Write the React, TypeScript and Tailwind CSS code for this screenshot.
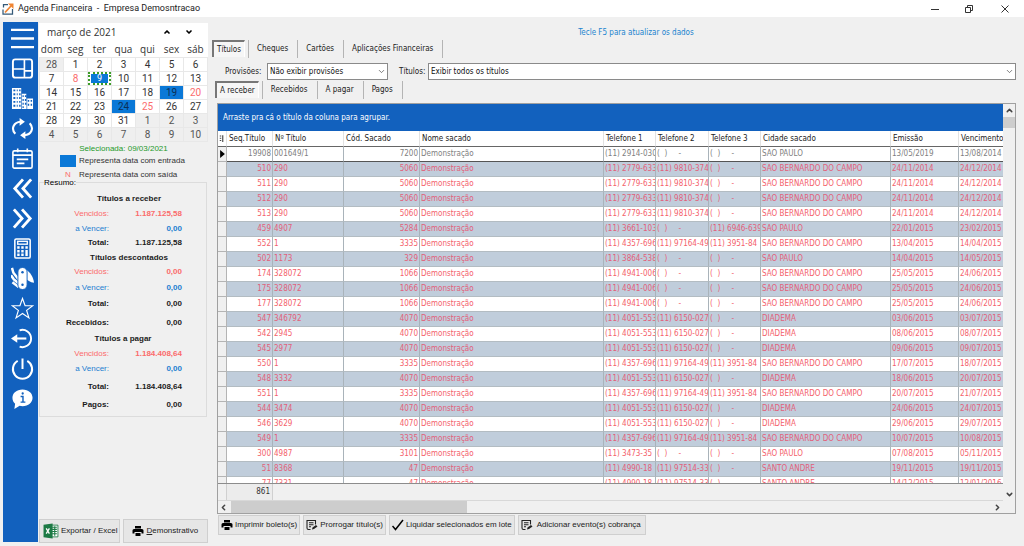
import React from "react";
import { ChevronDown, ChevronUp, ChevronLeft, ChevronRight } from "lucide-react";

const UI = "font-['DejaVu_Sans_Condensed','Noto_Sans',sans-serif]";
const ARIAL = "font-['Liberation_Sans',sans-serif]";

function SideIcon({ label, children }: { label: string; children: React.ReactNode }) {
  return (
    <button type="button" aria-label={label} className="flex h-[30px] w-full items-center justify-center">
      <svg viewBox="0 0 24 24" className="h-[23px] w-[23px]" fill="none" stroke="white" strokeWidth="2">
        {children}
      </svg>
    </button>
  );
}

function Sidebar() {
  return (
    <nav className="flex w-[35px] shrink-0 flex-col bg-[#1261be] pl-1 pt-px">
      <SideIcon label="Menu">
        <path d="M0 3h24M0 12h24M0 21h24" strokeWidth="2.400" />
      </SideIcon>
      <SideIcon label="Painel">
        <rect x="2" y="2.500" width="20" height="19" rx="2.500" />
        <path d="M14 3v18M2 12.500h12M14 14.500h8" strokeWidth="1.700" />
      </SideIcon>
      <SideIcon label="Empresa">
        <path d="M1 1h10v22H1zM11 7h5v16h-5zM16 12h7v11h-7z" fill="white" stroke="none" />
        <path
          d="M2.500 3.500h2M6 3.500h1M8.500 3.500h1.500M2.500 7.500h2M6 7.500h1M8.500 7.500h1.500M2.500 11.500h2M6 11.500h1M8.500 11.500h1.500M2.500 15.500h2M6 15.500h1M8.500 15.500h1.500M2.500 19.500h2M6 19.500h1M8.500 19.500h1.500M12 9.500h1.300M14.500 9.500H16M12 13.500h1.300M14.500 13.500H16M12 17.500h1.300M14.500 17.500H16M12 21h1.300M17.500 14.500h1.500M20.500 14.500H22M17.500 18.500h1.500M20.500 18.500H22"
          stroke="#1261be"
          strokeWidth="2"
        />
        <path d="M11 1v22M16.500 8v15" stroke="#1261be" strokeWidth="0.700" />
      </SideIcon>
      <SideIcon label="Atualizar">
        <path d="M4.500 17.500C-.5 12 3 5.500 10 5M19.500 6.500C24.500 12 21 18.500 14 19" strokeWidth="2.200" />
        <path d="M9 1l5.500 4L9 9.200zM15 14.800L9.500 19l5.500 4z" fill="white" stroke="none" />
      </SideIcon>
      <SideIcon label="Agenda">
        <rect x="2" y="4" width="20" height="18" rx="1.500" strokeWidth="1.700" />
        <path d="M2 8.500h20M7 1.500v4M17 1.500v4" strokeWidth="1.700" />
        <path d="M6 13h12M6 17h8" strokeWidth="1.800" />
      </SideIcon>
      <SideIcon label="Anterior">
        <path d="M12.500 2.500L4 12l8.500 9.500M21 2.500L12.500 12l8.500 9.500" strokeWidth="3" />
      </SideIcon>
      <SideIcon label="Próximo">
        <path d="M3 2.500L11.500 12 3 21.500M11.500 2.500L20 12l-8.500 9.500" strokeWidth="3" />
      </SideIcon>
      <SideIcon label="Calculadora">
        <rect x="4" y="2" width="16" height="20" rx="1.500" strokeWidth="1.600" />
        <rect x="7" y="4.500" width="10" height="3" strokeWidth="1.400" />
        <path d="M6.500 11h2.500M10.700 11h2.500M15 11h2.500M6.500 14.800h2.500M10.700 14.800h2.500M6.500 18.600h2.500M10.700 18.600h2.500" strokeWidth="2.600" />
        <path d="M16.250 13.500v6.400" strokeWidth="2.500" />
      </SideIcon>
      <SideIcon label="Ferramentas">
        <path d="M15 2.500c5 2.500 8.500 8 9 14-4-.5-7-2.500-9-5z" fill="white" stroke="none" />
        <path d="M1 1l1.500 5L8 13M0 8.500L3 13l5 4M1.500 16L8 21" strokeWidth="2.600" />
        <rect x="7.200" y="0.500" width="9.600" height="23" rx="4.800" fill="white" stroke="#1261be" strokeWidth="1" />
        <circle cx="12" cy="5.500" r="1.300" fill="#1261be" stroke="none" />
        <circle cx="12" cy="18.500" r="1.300" fill="#1261be" stroke="none" />
      </SideIcon>
      <SideIcon label="Favoritos">
        <path d="M12 1.500l2.700 7.600h8l-6.400 4.900 2.400 7.800L12 17.200l-6.700 4.600L7.700 14 1.300 9.100h8z" strokeWidth="1.200" />
      </SideIcon>
      <SideIcon label="Sair">
        <path d="M9 3.500A9 9 0 1 1 9 20.500" strokeWidth="2" />
        <path d="M3 12h13" strokeWidth="2.200" />
        <path d="M6.500 7.500L0 12l6.500 4.500z" fill="white" stroke="none" />
      </SideIcon>
      <SideIcon label="Desligar">
        <path d="M7 4a10 10 0 1 0 10 0M12 1.500v11" strokeWidth="2.100" />
      </SideIcon>
      <SideIcon label="Informações">
        <path d="M12 2.500c6.200 0 10.500 3.700 10.500 8.800S18.200 20 12 20c-1 0-2 0-3-.4L3.500 23l.8-5.500C2.500 16 1.500 14 1.500 11.300 1.500 6.200 5.800 2.500 12 2.500z" fill="white" stroke="none" />
        <path d="M10 10h2.500v5.500M10 15.800h5" stroke="#1261be" strokeWidth="1.500" />
        <circle cx="12.200" cy="6.800" r="1.200" fill="#1261be" stroke="none" />
      </SideIcon>
    </nav>
  );
}

const weekDays = ["dom", "seg", "ter", "qua", "qui", "sex", "sáb"];
const weeks = [
  [28, 1, 2, 3, 4, 5, 6],
  [7, 8, 9, 10, 11, 12, 13],
  [14, 15, 16, 17, 18, 19, 20],
  [21, 22, 23, 24, 25, 26, 27],
  [28, 29, 30, 31, 1, 2, 3],
  [4, 5, 6, 7, 8, 9, 10],
];

function dayStyle(week: number, day: number) {
  if ((week === 0 && day > 20) || (week >= 4 && day < 20)) return "bg-[#efefef] text-[#555]";
  if (day === 19 || day === 24) return "bg-[#0a78d7] text-[#0c2f55]";
  if (day === 8 || day === 20 || day === 25) return "text-[#fb6d6d]";
  return "text-[#333]";
}

function Calendar() {
  return (
    <section className="bg-white font-['Open_Sans','Noto_Sans',sans-serif] text-[#333]">
      <div className="flex h-[18px] items-center pl-2 pr-2 text-[10px] leading-4">
        <span className="flex-1">março de 2021</span>
        <button type="button" aria-label="Mês anterior" className="px-[7px]">
          <ChevronUp size={8} strokeWidth={5} className="text-black" />
        </button>
        <button type="button" aria-label="Próximo mês" className="px-[7px]">
          <ChevronDown size={8} strokeWidth={5} className="text-black" />
        </button>
      </div>
      <table className="w-full table-fixed border-collapse text-center font-['Roboto',sans-serif] text-[10px]">
        <thead>
          <tr className="h-4 font-['Open_Sans','Noto_Sans',sans-serif]">
            {weekDays.map((d) => (
              <th key={d} className="p-0 pt-px font-normal leading-3">
                {d}
              </th>
            ))}
          </tr>
        </thead>
        <tbody>
          {weeks.map((w, wi) => (
            <tr key={wi}>
              {w.map((d) => (
                <td key={d} className={"h-[14px] border border-[#e8e8e8] p-0 leading-[13px] " + dayStyle(wi, d)}>
                  {wi === 1 && d === 9 ? (
                    <span className="block border-2 border-dotted border-[#3c9c28] px-px">
                      <span className="block bg-[#0a78d7] text-[9px] leading-[9px] text-white">9</span>
                    </span>
                  ) : (
                    d
                  )}
                </td>
              ))}
            </tr>
          ))}
        </tbody>
      </table>
    </section>
  );
}

const red = "text-[#fb6b6b]";
const blue = "text-[#1c7fd0]";
const black = "text-[#1c1c1c]";

type Line = { title?: string; label?: string; value?: string; tone: string; gap: string };
const summary: Line[] = [
  { title: "Títulos a receber", tone: black, gap: "mt-0 pl-3" },
  { label: "Vencidos:", value: "1.187.125,58", tone: red, gap: "mt-px" },
  { label: "a Vencer:", value: "0,00", tone: blue, gap: "mt-px" },
  { label: "Total:", value: "1.187.125,58", tone: black, gap: "mt-0" },
  { title: "Títulos descontados", tone: black, gap: "mt-px pl-3" },
  { label: "Vencidos:", value: "0,00", tone: red, gap: "mt-0" },
  { label: "a Vencer:", value: "0,00", tone: blue, gap: "mt-0.5" },
  { label: "Total:", value: "0,00", tone: black, gap: "mt-0.5" },
  { label: "Recebidos:", value: "0,00", tone: black, gap: "mt-[5px]" },
  { title: "Títulos a pagar", tone: black, gap: "mt-0.5" },
  { label: "Vencidos:", value: "1.184.408,64", tone: red, gap: "mt-px" },
  { label: "a Vencer:", value: "0,00", tone: blue, gap: "mt-px" },
  { label: "Total:", value: "1.184.408,64", tone: black, gap: "mt-[4px]" },
  { label: "Pagos:", value: "0,00", tone: black, gap: "mt-[4px]" },
];

function Summary() {
  return (
    <fieldset className="-mt-[3px] mr-px border border-[#dcdcdc] pb-1">
      <legend className="ml-1 text-[8px] leading-[10px]">Resumo:</legend>
      <div className="pt-1">
        {summary.map((l, i) =>
          l.title ? (
            <h2 key={i} className={"text-center text-[8px] font-bold leading-[14px] " + l.tone + " " + l.gap}>
              {l.title}
            </h2>
          ) : (
            <div key={i} className={"flex text-[8px] leading-[14px] " + l.tone + " " + l.gap}>
              <span className={"w-[69px] text-right " + (l.tone === black ? "font-bold" : "")}>{l.label}</span>
              <span className="w-[73px] text-right font-bold">{l.value}</span>
            </div>
          )
        )}
      </div>
    </fieldset>
  );
}

function Printer() {
  return (
    <svg viewBox="0 0 24 24" className="h-3 w-3 shrink-0" fill="black">
      <path d="M6 2h12v5H6zM4 8h16a3 3 0 0 1 3 3v6h-4v-3H5v3H1v-6a3 3 0 0 1 3-3zM7 16h10v6H7z" />
    </svg>
  );
}

function NoteEdit() {
  return (
    <svg viewBox="0 0 24 24" className="h-3 w-3 shrink-0" fill="none" stroke="#222" strokeWidth="2.200">
      <path d="M9 21H5a3 3 0 0 1-3-3V3h17v8M6 7.500h9M6 11.500h9M6 15.500h4" />
      <path d="M12 21l1-4 7-5 3 3-7 5z" fill="#222" stroke="none" />
    </svg>
  );
}

function CheckMark() {
  return (
    <svg viewBox="0 0 24 24" className="h-3 w-3 shrink-0" fill="none" stroke="black" strokeWidth="3">
      <path d="M1 14l6 7L22 2" />
    </svg>
  );
}

function Excel() {
  return (
    <svg viewBox="0 0 30 30" className="h-4 w-4 shrink-0">
      <path d="M15 4h13v22H15z" fill="white" stroke="#1d7a45" strokeWidth="1.600" />
      <path d="M17 8h9M17 12h9M17 16h9M17 20h9M22 6v18" stroke="#1d7a45" strokeWidth="2" />
      <path d="M1 3.500L18 1v28L1 26.500z" fill="#1d7a45" />
      <path d="M6 10l6 10M12 10L6 20" stroke="white" strokeWidth="2.400" />
    </svg>
  );
}

function ActionButton({ className = "", children }: { className?: string; children: React.ReactNode }) {
  return (
    <button
      type="button"
      className={"flex items-center whitespace-nowrap border border-[#cfcfcf] bg-[#e6e6e6] text-[#222] " + className}
    >
      {children}
    </button>
  );
}

function Tabs({ items, className }: { items: string[]; className: string }) {
  return (
    <div role="tablist" className={"flex h-[18px] text-[8px] text-[#222] " + className}>
      {items.map((t, i) =>
        i === 0 ? (
          <div key={t} className="border-r border-[#b4b4b4] pr-[3px]">
            <button
              type="button"
              role="tab"
              aria-selected
              className="h-[17px] border-l-2 border-t-2 border-[#777] border-r border-r-white bg-[#f6f6f6] px-[3px]"
            >
              {t}
            </button>
          </div>
        ) : (
          <button key={t} type="button" role="tab" aria-selected={false} className="border-r border-[#b4b4b4] pl-2 pr-[9px]">
            {t}
          </button>
        )
      )}
    </div>
  );
}

function Select({ id, value, className }: { id: string; value: string; className: string }) {
  return (
    <div className={"relative " + className}>
      <select
        id={id}
        defaultValue={value}
        className="block h-[17px] w-full appearance-none rounded-none border border-[#8a8a8a] bg-white pl-0.5 text-[8px] text-[#111]"
      >
        <option>{value}</option>
      </select>
      <ChevronDown size={9} className="pointer-events-none absolute right-0.5 top-1 text-[#555]" />
    </div>
  );
}

const N = "(  )     -";
const SP = "SAO PAULO";
const SB = "SAO BERNARDO DO CAMPO";
const DI = "DIADEMA";
const SA = "SANTO ANDRE";
const rows: string[][] = [
  ["19908", "001649/1", "7200", "(11) 2914-030", N, N, SP, "13/05/2019", "13/08/2014"],
  ["510", "290", "5060", "(11) 2779-633", "(11) 9810-374", N, SB, "24/11/2014", "24/12/2014"],
  ["511", "290", "5060", "(11) 2779-633", "(11) 9810-374", N, SB, "24/11/2014", "24/12/2014"],
  ["512", "290", "5060", "(11) 2779-633", "(11) 9810-374", N, SB, "24/11/2014", "24/12/2014"],
  ["513", "290", "5060", "(11) 2779-633", "(11) 9810-374", N, SB, "24/11/2014", "24/12/2014"],
  ["459", "4907", "5284", "(11) 3661-103", N, "(11) 6946-639", SP, "22/01/2015", "23/02/2015"],
  ["552", "1", "3335", "(11) 4357-696", "(11) 97164-49", "(11) 3951-84", SB, "13/04/2015", "14/04/2015"],
  ["502", "1173", "329", "(11) 3864-538", N, N, SP, "14/04/2015", "14/05/2015"],
  ["174", "328072", "1066", "(11) 4941-006", N, N, SB, "25/05/2015", "24/06/2015"],
  ["175", "328072", "1066", "(11) 4941-006", N, N, SB, "25/05/2015", "24/06/2015"],
  ["177", "328072", "1066", "(11) 4941-006", N, N, SB, "25/05/2015", "24/06/2015"],
  ["547", "346792", "4070", "(11) 4051-553", "(11) 6150-027", N, DI, "03/06/2015", "03/07/2015"],
  ["542", "2945", "4070", "(11) 4051-553", "(11) 6150-027", N, DI, "08/06/2015", "08/07/2015"],
  ["545", "2977", "4070", "(11) 4051-553", "(11) 6150-027", N, DI, "09/06/2015", "09/07/2015"],
  ["550", "1", "3335", "(11) 4357-696", "(11) 97164-49", "(11) 3951-84", SB, "17/07/2015", "18/07/2015"],
  ["548", "3332", "4070", "(11) 4051-553", "(11) 6150-027", N, DI, "18/06/2015", "20/07/2015"],
  ["551", "1", "3335", "(11) 4357-696", "(11) 97164-49", "(11) 3951-84", SB, "20/07/2015", "21/07/2015"],
  ["544", "3474", "4070", "(11) 4051-553", "(11) 6150-027", N, DI, "24/06/2015", "24/07/2015"],
  ["546", "3629", "4070", "(11) 4051-553", "(11) 6150-027", N, DI, "29/06/2015", "29/07/2015"],
  ["549", "1", "3335", "(11) 4357-696", "(11) 97164-49", "(11) 3951-84", SB, "10/07/2015", "10/08/2015"],
  ["300", "4987", "3101", "(11) 3473-35", N, N, SP, "07/08/2015", "05/11/2015"],
  ["51", "8368", "47", "(11) 4990-18", "(11) 97514-33", N, SA, "19/11/2015", "19/11/2015"],
  ["77", "7331", "47", "(11) 4990-18", "(11) 97514-33", N, SA, "14/12/2015", "12/01/2016"],
];
const headers = [
  "Seq.Título",
  "Nº Título",
  "Cód. Sacado",
  "Nome sacado",
  "Telefone 1",
  "Telefone 2",
  "Telefone 3",
  "Cidade sacado",
  "Emissão",
  "Vencimento",
];

function GridTable() {
  return (
    <table className="w-full table-fixed border-separate border-spacing-0 whitespace-pre text-[8px]">
      <colgroup>
        <col className="w-[9px]" />
        <col className="w-[46px]" />
        <col className="w-[71px]" />
        <col className="w-[76px]" />
        <col />
        <col className="w-[52px]" />
        <col className="w-[53px]" />
        <col className="w-[52px]" />
        <col className="w-[130px]" />
        <col className="w-[68px]" />
        <col className="w-[44px]" />
      </colgroup>
      <thead>
        <tr className="bg-white text-left text-[#222]">
          <th className="h-4 overflow-hidden border-b border-r border-b-[#666] border-r-[#e2e2e2] p-0" aria-label="Indicador">
            <svg viewBox="0 0 8 10" className="mx-auto h-2 w-[6px]" stroke="#444" strokeWidth="1.500">
              <path d="M1 1h2M1 4h2M1 7h2M5 0v9" />
            </svg>
          </th>
          {headers.map((h) => (
            <th key={h} className="h-4 overflow-hidden border-b border-r border-b-[#666] border-r-[#e2e2e2] p-0 pl-0.5 font-normal leading-[14px] last:border-r-0">
              {h}
            </th>
          ))}
        </tr>
      </thead>
      <tbody>
        {rows.map((r, i) => {
          const cells = [r[0], r[1], r[2], "Demonstração", ...r.slice(3)];
          const tone =
            i === 0
              ? "bg-white text-[#808080]"
              : i % 2
                ? "bg-[#c0cddb] text-[#e2607a]"
                : "bg-white text-[#f4616b]";
          const edge = i === 0 ? "border-b-[#555]" : "border-b-[#b3bcc2]";
          return (
            <tr key={i} className={tone}>
              <td className="h-[15px] border-b border-r border-[#b4b4b4] bg-[#f0f0f0] p-0">
                {i === 0 && (
                  <svg viewBox="0 0 6 10" className="mx-auto h-[8px] w-[5px]" fill="black">
                    <path d="M0 0l6 5-6 5z" />
                  </svg>
                )}
              </td>
              {cells.map((c, j) => (
                <td
                  key={j}
                  className={
                    "h-[15px] overflow-hidden border-b border-r border-r-[#a9b3ba] p-0 px-px leading-[14px] last:border-r-0 " +
                    edge +
                    (j === 0 || j === 2 ? " text-right" : "")
                  }
                >
                  {c}
                </td>
              ))}
            </tr>
          );
        })}
      </tbody>
    </table>
  );
}

function Grid() {
  return (
    <div className="flex min-h-0 flex-1 border border-[#a0a0a0] bg-[#f0f0f0]">
      <div className="flex min-w-0 flex-1 flex-col">
        <div className="flex h-[27px] shrink-0 items-center bg-[#1261be] px-[5px] text-[8px] text-white">
          Arraste pra cá o título da coluna para agrupar.
        </div>
        <div className="min-h-0 flex-1 overflow-hidden">
          <GridTable />
        </div>
        <div className="flex h-[18px] shrink-0 border-y border-t-[#8c8c8c] border-b-[#d8d8d8] text-[8px] text-[#333]">
          <div className="w-[9px] border-r border-[#d0d0d0]" />
          <div className="w-[46px] border-r border-[#d0d0d0] bg-[#ececec] pr-0.5 text-right leading-4">861</div>
        </div>
        <div className="flex h-[12px] shrink-0 items-center justify-between pl-px pr-px">
          <ChevronLeft size={9} strokeWidth={4} className="text-[#444]" />
          <div className="ml-[3px] flex h-full flex-1">
            <div className="h-full w-[31%] bg-[#cdcdcd]" />
          </div>
          <ChevronRight size={9} strokeWidth={4} className="text-[#444]" />
        </div>
      </div>
      <div className="flex w-3 shrink-0 flex-col items-center bg-[#f0f0f0]">
        <ChevronUp size={9} strokeWidth={4} className="my-0.5 text-[#444]" />
        <div className="h-[11px] w-full bg-[#cdcdcd]" />
        <div className="flex-1" />
        <ChevronDown size={9} strokeWidth={4} className="mb-[14px] text-[#444]" />
      </div>
    </div>
  );
}

export default function App() {
  return (
    <div className={"flex h-screen flex-col overflow-hidden bg-[#f0f0f0] " + UI}>
      <header className="flex h-[17px] shrink-0 items-center bg-white pl-0.5 font-['Roboto',sans-serif] text-[9px] text-[#222]">
        <svg viewBox="0 0 24 24" className="mr-1 h-3 w-3" fill="none">
          <path d="M12 3H3v6M2 13v9h19V12" stroke="#355a78" strokeWidth="2.500" />
          <path d="M6 19L18 6" stroke="#ef8432" strokeWidth="3.500" />
          <path d="M12 1h11v11z" fill="#ef8432" />
        </svg>
        <h1 className="flex-1 whitespace-pre">Agenda Financeira  -  Empresa Demosntracao</h1>
        <button type="button" aria-label="Minimizar" className="px-3">
          <svg viewBox="0 0 10 10" className="h-[10px] w-[10px]" stroke="#333">
            <path d="M1 5.500h8" />
          </svg>
        </button>
        <button type="button" aria-label="Restaurar" className="px-3">
          <svg viewBox="0 0 10 10" className="h-[10px] w-[10px]" stroke="#333" fill="none">
            <path d="M1.500 3.500h5v5h-5zM3.500 3V1.500h5v5H7" />
          </svg>
        </button>
        <button type="button" aria-label="Fechar" className="px-[14px]">
          <svg viewBox="0 0 10 10" className="h-[10px] w-[10px]" stroke="#333" fill="none">
            <path d="M1.500 1.500l7 7M8.500 1.500l-7 7" />
          </svg>
        </button>
      </header>

      <div className="flex min-h-0 flex-1 pl-[3px]">
        <div className="flex pb-1 pt-[5px]">
          <Sidebar />
        </div>

        <aside className={"flex w-[170px] shrink-0 flex-col pb-[3px] pl-px pt-[6px] " + ARIAL}>
          <Calendar />
          <div className="text-[8px] leading-3 text-[#333]">
            <p className="pt-px text-center text-[#1d9a2a]">Selecionada: 09/03/2021</p>
            <p className="flex items-center pl-[21px]">
              <span className="mr-[3px] h-3 w-4 bg-[#0a78d7]" />
              Representa data com entrada
            </p>
            <p className="flex items-center pl-[21px] pt-0.5">
              <span className="mr-[3px] w-4 text-center text-[#fb6b6b]">N</span>
              Representa data com saída
            </p>
          </div>
          <Summary />
          <div className="mt-auto flex gap-[3px]">
            <ActionButton className="h-6 flex-1 pl-[3px] text-[8px]">
              <Excel />
              <span className="ml-0.5">Exportar / Excel</span>
            </ActionButton>
            <ActionButton className="h-6 flex-1 pl-2 text-[8px]">
              <Printer />
              <span className="ml-[3px]">
                <u>D</u>emonstrativo
              </span>
            </ActionButton>
          </div>
        </aside>

        <main className="flex min-w-0 flex-1 flex-col pb-[11px] pl-1 pr-2">
          <p className="pl-11 pt-2.5 text-center text-[8px] leading-3 text-[#2184cf]">Tecle F5 para atualizar os dados</p>
          <Tabs items={["Títulos", "Cheques", "Cartões", "Aplicações Financeiras"]} className="mt-px" />
          <div className="mt-[5px] flex items-center pl-[13px] text-[8px] text-[#222]">
            <label htmlFor="provisoes" className="mr-1 w-[38px] whitespace-nowrap">
              Provisões:
            </label>
            <Select id="provisoes" value="Não exibir provisões" className="w-[121px]" />
            <label htmlFor="titulos" className="ml-[11px] mr-[3px] w-[26px] whitespace-nowrap">
              Títulos:
            </label>
            <Select id="titulos" value="Exibir todos os títulos" className="flex-1" />
          </div>
          <Tabs items={["A receber", "Recebidos", "A pagar", "Pagos"]} className="ml-[3px] mt-px" />
          <div className="ml-[5px] mt-1 flex min-h-0 flex-1">
            <Grid />
          </div>
          <div className={"ml-[6px] mt-px flex gap-[3px] " + ARIAL}>
            <ActionButton className="h-5 gap-0.5 px-0.5 text-[8px]">
              <Printer />
              Imprimir boleto(s)
            </ActionButton>
            <ActionButton className="h-5 gap-0.5 px-0.5 text-[8px]">
              <NoteEdit />
              Prorrogar título(s)
            </ActionButton>
            <ActionButton className="h-5 gap-0.5 px-0.5 text-[8px]">
              <CheckMark />
              Liquidar selecionados em lote
            </ActionButton>
            <ActionButton className="h-5 gap-1 pl-0.5 pr-1 text-[8px]">
              <NoteEdit />
              Adicionar evento(s) cobrança
            </ActionButton>
          </div>
        </main>
      </div>
    </div>
  );
}
